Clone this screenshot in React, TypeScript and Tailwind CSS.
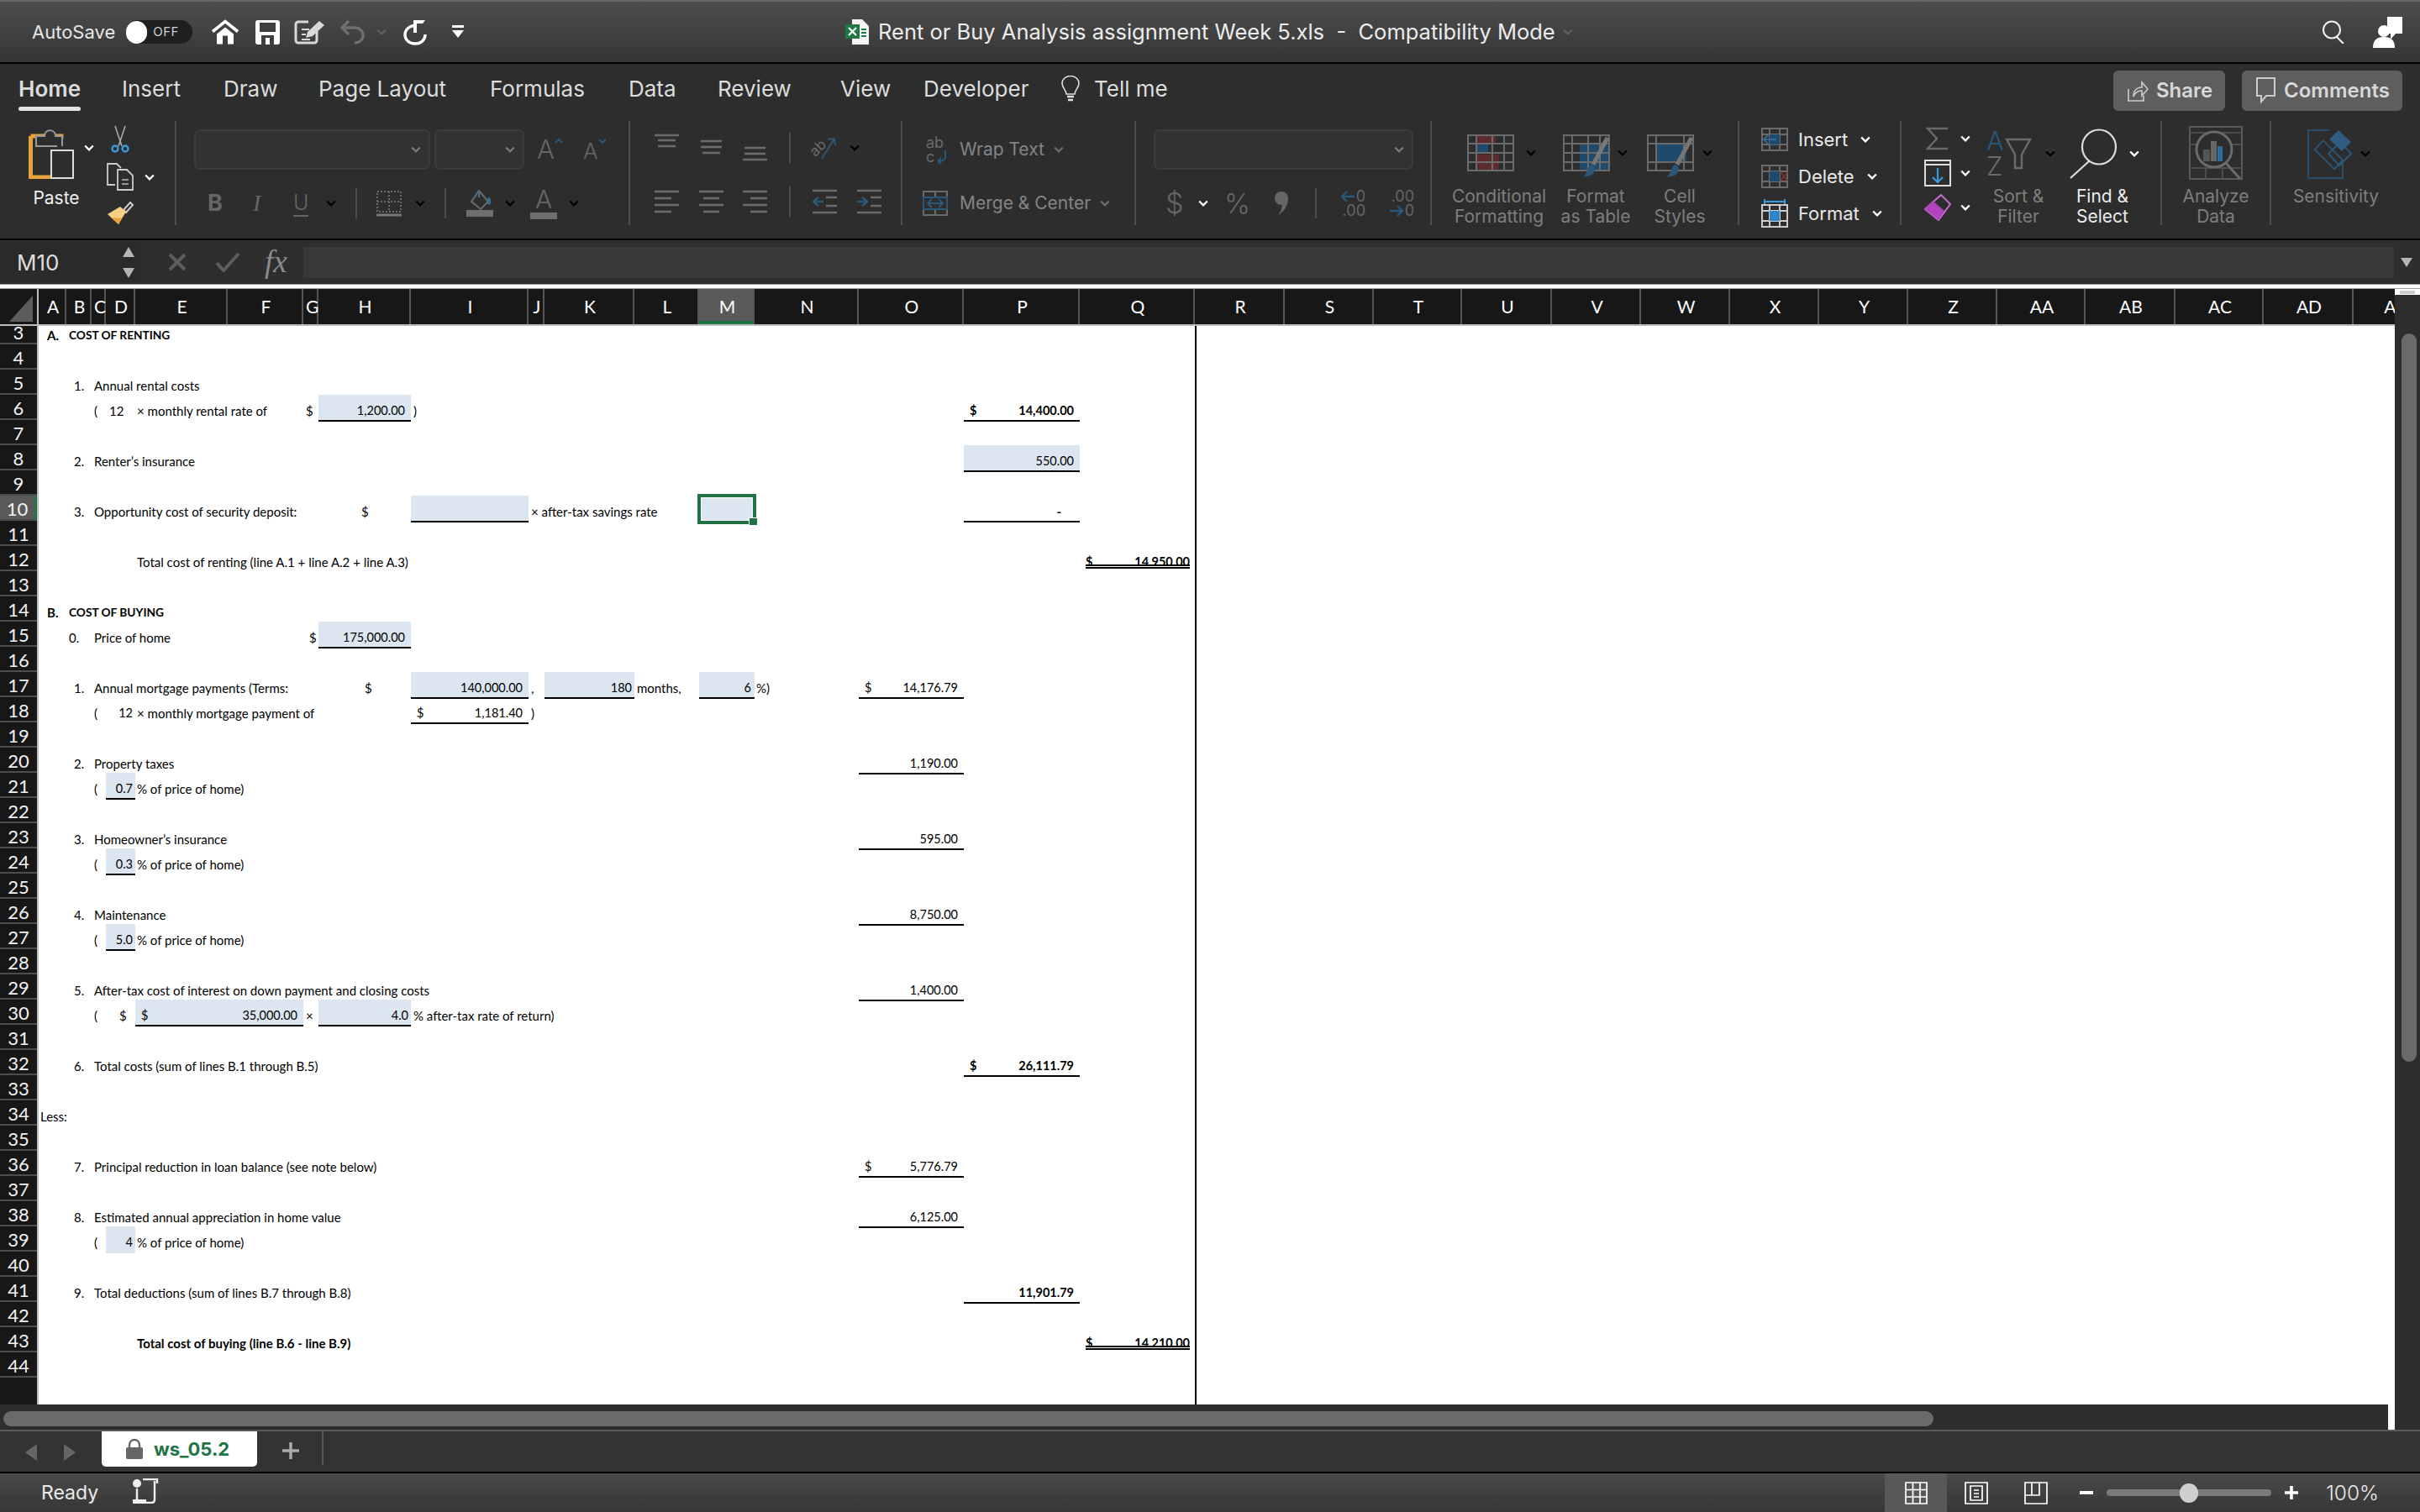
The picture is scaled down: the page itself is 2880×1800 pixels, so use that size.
import type { ReactNode } from 'react';

const GRAY = '#6b6b6b';
const BLUE = '#2b5878';

type SvgProps = { className?: string; children: ReactNode; w: number; h: number };

const Ic = ({ className = '', children, w, h }: SvgProps) => (
  <svg className={`shrink-0 ${className}`} width={w} height={h} viewBox={`0 0 ${w} ${h}`} fill="none">
    {children}
  </svg>
);

const Chev = ({ className = 'text-[#777]' }: { className?: string }) => (
  <svg className={`h-[8px] w-[12px] shrink-0 ${className}`} viewBox="0 0 12 8" fill="none">
    <path d="M1.2 1.5 6 6.3l4.8-4.8" stroke="currentColor" strokeWidth="2.4" />
  </svg>
);

const Sep = ({ className = '' }: { className?: string }) => <div className={`h-[36px] w-[2px] shrink-0 bg-[#4d4d4d] ${className}`} />;

// ---------- quick access ----------
const TitleBar = () => (
  <div className="flex h-[76px] shrink-0 items-center border-t-2 border-b-2 border-t-[#666] border-b-black bg-linear-to-b from-[#4e4e4e] to-[#353535]">
    <div className="flex w-[1006px] shrink-0 items-center pl-[38px]">
      <span className="text-[22px] text-[#e6e6e6]">AutoSave</span>
      <div className="ml-[13px] flex h-[28px] w-[79px] items-center rounded-full bg-[#1f1f1f]">
        <div className="h-[27px] w-[25px] rounded-full bg-white" />
        <span className="ml-[7px] text-[15px] tracking-[0.5px] text-[#cfcfcf]">OFF</span>
      </div>
      <Ic w={34} h={30} className="ml-[22px]">
        <path d="M2 14.5 17 2.5l15 12" stroke="#fff" strokeWidth="3.6" />
        <path d="M7 29.500V17.500l10-8 10 8v12h-7v-10h-6v10z" fill="#fff" />
      </Ic>
      <Ic w={29} h={29} className="ml-[19px]">
        <rect width="29" height="29" rx="3" fill="#fff" />
        <rect x="5" y="3" width="19" height="11" fill="#3f3f3f" />
        <rect x="7" y="18" width="15" height="11" fill="#3f3f3f" />
        <rect x="12" y="21" width="5" height="8" fill="#fff" />
      </Ic>
      <Ic w={37} h={30} className="ml-[17px]">
        <path d="M17 3H5a3 3 0 0 0-3 3v19a3 3 0 0 0 3 3h19a3 3 0 0 0 3-3V14" stroke="#d8d8d8" strokeWidth="3" />
        <path d="m14 22 2-7L30 2l6 5-14 13z" fill="#d8d8d8" />
        <path d="M9 12h9M9 18h5M9 24h10" stroke="#d8d8d8" strokeWidth="2" />
      </Ic>
      <Ic w={32} h={30} className="ml-[17px]">
        <path d="M11 2 3 10l8 8" stroke="#6f6f6f" strokeWidth="3.4" />
        <path d="M4 10h14c6 0 10 4 10 9s-4 9-10 9" stroke="#6f6f6f" strokeWidth="3.4" />
      </Ic>
      <Chev className="ml-[12px] text-[#5f5f5f]" />
      <Ic w={30} h={31} className="ml-[19px]">
        <path d="M15 7C8 8 3 12 3 18.5 3 24.5 8 29 15 29s12-4.5 12-11" stroke="#fff" strokeWidth="3.4" />
        <path d="M17 1h10l-3 4H17v11h-4V1z" fill="#fff" />
      </Ic>
      <Ic w={16} h={16} className="ml-[28px]">
        <rect x="1" width="14" height="3" fill="#fff" />
        <path d="M1 6h14l-7 9z" fill="#fff" />
      </Ic>
    </div>
    <Ic w={28} h={30}>
      <path d="M8 0h12l8 8v22H8z" fill="#f4f4f4" />
      <rect y="6" width="17" height="17" fill="#1e7a45" />
      <path d="m4 10 9 9m0-9-9 9" stroke="#fff" strokeWidth="2.2" />
      <path d="M19 12h6M19 16h6M19 20h6" stroke="#1e7a45" strokeWidth="2" />
    </Ic>
    <span className="ml-[11px] whitespace-pre text-[25.5px] text-[#ececec]">Rent or Buy Analysis assignment Week 5.xls  -  Compatibility Mode</span>
    <Chev className="ml-[9px] text-[#5f5f5f]" />
    <div className="ml-auto flex items-center pr-[20px]">
      <Ic w={28} h={28}>
        <circle cx="12" cy="11.5" r="10" stroke="#eee" strokeWidth="2" />
        <path d="m18 20 8 8" stroke="#eee" strokeWidth="2.2" />
      </Ic>
      <Ic w={36} h={37} className="ml-[33px]">
        <path d="M17 0h18v20H27l-6 7v-7h-4z" fill="#fff" />
        <circle cx="13" cy="17" r="7" fill="#fff" />
        <path d="M0 37c0-9 4-13 13-13s13 4 13 13z" fill="#fff" />
      </Ic>
    </div>
  </div>
);

// ---------- tabs ----------
const TABS = [
  { label: 'Insert', w: 'w-[121px]' },
  { label: 'Draw', w: 'w-[113px]' },
  { label: 'Page Layout', w: 'w-[204px]' },
  { label: 'Formulas', w: 'w-[165px]' },
  { label: 'Data', w: 'w-[106px]' },
  { label: 'Review', w: 'w-[146px]' },
  { label: 'View', w: 'w-[99px]' },
  { label: 'Developer', w: 'w-[163px]' },
];

const TabRow = () => (
  <div className="flex h-[68px] shrink-0 items-start pl-[22px] pt-[10px] text-[26px] text-[#dcdcdc]">
    <div className="w-[123px] shrink-0">
      <span className="inline-block font-semibold">
        Home
        <div className="mt-[2px] h-[5px] rounded-full bg-[#e2e2e2]" />
      </span>
    </div>
    {TABS.map(t => (
      <span key={t.label} className={`${t.w} shrink-0`}>
        {t.label}
      </span>
    ))}
    <Ic w={24} h={32} className="mt-[4px]">
      <path d="M7 22c0-5-5-7-5-13a10 8.500 0 0 1 20 0c0 6-5 8-5 13z" stroke="#ddd" strokeWidth="1.6" />
      <path d="M8 25h8M9 29h6" stroke="#ddd" strokeWidth="2.4" />
    </Ic>
    <span className="ml-[16px]">Tell me</span>
    <div className="ml-auto mr-[21px] -mt-[2px] flex text-[#d8d8d8]">
      <div className="flex h-[48px] w-[133px] items-center rounded-[6px] bg-[#5e5e5e] pl-[16px] text-[24px] font-semibold">
        <Ic w={26} h={28}>
          <path d="M2 12v14h18v-6" stroke="#ccc" strokeWidth="1.6" />
          <path d="M8 21c0-7 4-11 10-11V4l7 8-7 8v-6c-4 0-8 2-10 7z" stroke="#ccc" strokeWidth="1.6" />
        </Ic>
        <span className="ml-[9px]">Share</span>
      </div>
      <div className="ml-[20px] flex h-[48px] w-[191px] items-center rounded-[6px] bg-[#5e5e5e] pl-[17px] text-[24px] font-semibold">
        <Ic w={24} h={32}>
          <path d="M1 1h21v21H12l-6 7v-7H1z" stroke="#ccc" strokeWidth="2" />
        </Ic>
        <span className="ml-[9px]">Comments</span>
      </div>
    </div>
  </div>
);

// ---------- ribbon ----------
const Group = ({ className, children }: { className: string; children: ReactNode }) => (
  <div className={`h-[124px] shrink-0 border-r-2 border-[#4d4d4d] ${className}`}>{children}</div>
);

const AlignIcon = ({ rows }: { rows: [number, number][] }) => (
  <Ic w={29} h={36}>
    {rows.map(([y, x]) => (
      <path key={y} d={`M${x} ${y}h${29 - 2 * x}`} stroke={GRAY} strokeWidth="2.6" />
    ))}
  </Ic>
);

const HAlign = ({ lines }: { lines: string[] }) => (
  <Ic w={29} h={28}>
    {lines.map((d, i) => (
      <path key={i} d={d} stroke={GRAY} strokeWidth="2.6" />
    ))}
  </Ic>
);

const BigLabel = ({ children, className = 'text-[#7e7e7e]' }: { children: ReactNode; className?: string }) => (
  <div className={`text-center text-[21px] leading-[24px] ${className}`}>{children}</div>
);

const GridLines = ({ c = GRAY }: { c?: string }) => (
  <g stroke={c} strokeWidth="2">
    <rect x="1" y="1" width="54" height="42" />
    <path d="M1 11h54M1 22h54M1 33h54M11 1v42M30 1v42M44 1v42" />
  </g>
);

const Brush = () => (
  <g>
    <path d="M36 36 53 4" stroke="#777" strokeWidth="5" />
    <path d="M24 50c6 1 14-2 14-9 0-4-5-6-7-3-2 2-1 7-7 12z" fill={BLUE} />
  </g>
);

const Clipboard = () => (
  <Group className="flex w-[210px]">
    <div className="ml-[30px] w-[74px] pt-[10px]">
      <Ic w={56} h={59} className="ml-[4px]">
        <path d="M1.500 9h39M1.500 9v49h26" stroke="#e8a33a" strokeWidth="5" transform="translate(1 -1)" />
        <path d="M37 6v12" stroke="#e8a33a" strokeWidth="5" />
        <path d="M9 21V8h10c0-9 13-9 13 0h8v12" stroke="#999" strokeWidth="2" fill="#2d2d2d" />
        <path d="M9 20h25" stroke="#999" strokeWidth="2" />
        <rect x="27" y="25" width="26" height="33" stroke="#ddd" strokeWidth="2" fill="#2d2d2d" />
      </Ic>
      <div className="mt-[11px] text-center text-[21px] leading-[24px] text-[#efefef]">Paste</div>
    </div>
    <Chev className="-ml-[4px] mt-[28px] text-white" />
    <div className="ml-[15px] flex flex-col pt-[6px]">
      <Ic w={26} h={34} className="ml-[3px]">
        <path d="m7 0 8 24M19 0l-8 24" stroke="#aaa" strokeWidth="1.600" />
        <circle cx="7" cy="27" r="3.500" stroke="#3a9bdc" strokeWidth="2.400" />
        <circle cx="19" cy="27" r="3.500" stroke="#3a9bdc" strokeWidth="2.400" />
      </Ic>
      <div className="mt-[10px] flex items-center">
        <Ic w={33} h={33}>
          <path d="M10 26H1V1h11l5 5" stroke="#ccc" strokeWidth="1.800" />
          <path d="M13 8h11l7 7v17H13z" stroke="#ccc" strokeWidth="1.800" />
          <path d="M18 20h8M18 25h8" stroke="#999" strokeWidth="1.800" />
        </Ic>
        <Chev className="ml-[12px] text-white" />
      </div>
      <Ic w={33} h={30} className="mt-[11px]">
        <path d="M20 12 28 3l3 3-8 9z" stroke="#ccc" strokeWidth="2" />
        <path d="M16 8 1 17l13 12 9-15z" fill="#f4cf84" />
        <path d="m5 21 9 8 4-7z" fill="#e8a33a" />
      </Ic>
    </div>
  </Group>
);

const Font = () => (
  <Group className="w-[540px]">
    <div className="mt-[10px] flex h-[48px] items-center">
      <div className="ml-[21px] flex h-[48px] w-[281px] items-center justify-end rounded-[7px] border-2 border-[#3b3b3b] bg-[#323232] pr-[9px]">
        <Chev />
      </div>
      <div className="ml-[5px] flex h-[48px] w-[107px] items-center justify-end rounded-[7px] border-2 border-[#3b3b3b] bg-[#323232] pr-[9px]">
        <Chev />
      </div>
      <div className="ml-[15px] flex w-[32px] items-start text-[31px] font-light leading-[36px] text-[#666]">
        A
        <Ic w={10} h={8} className="mt-[4px]">
          <path d="m1 6 4-4 4 4" stroke={BLUE} strokeWidth="2" />
        </Ic>
      </div>
      <div className="ml-[23px] flex w-[32px] items-start pt-[4px] text-[26px] font-light leading-[32px] text-[#666]">
        A
        <Ic w={10} h={8}>
          <path d="m1 2 4 4 4-4" stroke={BLUE} strokeWidth="2" />
        </Ic>
      </div>
    </div>
    <div className="mt-[20px] flex h-[40px] items-center">
      <span className="ml-[37px] w-[16px] text-[27px] font-bold text-[#666]">B</span>
      <span className="ml-[38px] w-[14px] font-['Liberation_Serif',serif] text-[28px] italic text-[#666]">I</span>
      <span className="ml-[34px] w-[18px] border-b-2 border-[#666] text-[25px] font-light leading-[30px] text-[#666]">U</span>
      <Chev className="ml-[21px]" />
      <Sep className="ml-[23px]" />
      <Ic w={30} h={31} className="ml-[23px]">
        <rect x="1" y="1" width="28" height="24" stroke={GRAY} strokeWidth="2" strokeDasharray="2 2" />
        <path d="M15 1v24M1 13h28" stroke={GRAY} strokeWidth="2" strokeDasharray="2 2" />
        <path d="M0 29h30" stroke="#777" strokeWidth="3" />
      </Ic>
      <Chev className="ml-[16px]" />
      <Sep className="ml-[23px]" />
      <Ic w={32} h={32} className="ml-[24px]">
        <path d="m15 1 11 13-9 9-11-9z" stroke={GRAY} strokeWidth="2" />
        <path d="M15 1v8M27 10c2 3 2 6 0 7-2-1-2-4 0-7z" stroke="#3c6f95" strokeWidth="2" />
        <rect y="24" width="32" height="8" fill="#6e6e6e" />
      </Ic>
      <Chev className="ml-[14px]" />
      <div className="ml-[18px] w-[32px] text-center">
        <div className="text-[30px] font-light leading-[26px] text-[#666]">A</div>
        <div className="mt-[3px] h-[8px] bg-[#6e6e6e]" />
      </div>
      <Chev className="ml-[14px]" />
    </div>
  </Group>
);

const Alignment = () => (
  <Group className="w-[324px]">
    <div className="mt-[12px] flex h-[40px] items-center">
      <div className="ml-[29px]">
        <AlignIcon rows={[[3, 0], [9, 4], [16, 4]]} />
      </div>
      <div className="ml-[24px]">
        <AlignIcon rows={[[10, 2], [17, 2], [24, 4]]} />
      </div>
      <div className="ml-[23px]">
        <AlignIcon rows={[[18, 2], [25, 2], [32, 0]]} />
      </div>
      <Sep className="ml-[26px]" />
      <div className="ml-[24px] flex h-[36px] w-[36px] shrink-0 items-center justify-center">
        <span className="-ml-[8px] -rotate-45 text-[17px] leading-[18px] text-[#6b6b6b]">ab</span>
        <Ic w={18} h={28} className="-ml-[6px]">
          <path d="M1 27 16 3m0 0-8 1m8-1 1 8" stroke={BLUE} strokeWidth="2" />
        </Ic>
      </div>
      <Chev className="ml-[10px]" />
    </div>
    <div className="mt-[24px] flex h-[40px] items-center">
      <div className="ml-[29px]">
        <HAlign lines={['M0 2h29', 'M0 10h20', 'M0 18h29', 'M0 26h20']} />
      </div>
      <div className="ml-[24px]">
        <HAlign lines={['M0 2h29', 'M5 10h19', 'M0 18h29', 'M5 26h19']} />
      </div>
      <div className="ml-[23px]">
        <HAlign lines={['M0 2h29', 'M9 10h20', 'M0 18h29', 'M9 26h20']} />
      </div>
      <Sep className="ml-[26px]" />
      <Ic w={29} h={30} className="ml-[26px]">
        <path d="M0 2h29M16 10h13M16 20h13M0 28h29" stroke={GRAY} strokeWidth="2.6" />
        <path d="M1 15h12m-6-5-6 5 6 5" stroke={BLUE} strokeWidth="2.400" />
      </Ic>
      <Ic w={29} h={30} className="ml-[24px]">
        <path d="M0 2h29M16 10h13M16 20h13M0 28h29" stroke={GRAY} strokeWidth="2.6" />
        <path d="M0 15h12m-6-5 6 5-6 5" stroke={BLUE} strokeWidth="2.400" />
      </Ic>
    </div>
  </Group>
);

const Wrap = () => (
  <Group className="w-[278px] text-[21px] text-[#858585]">
    <div className="mt-[14px] flex h-[40px] items-center">
      <div className="ml-[28px] w-[30px] shrink-0 text-[18px] leading-[17px] text-[#6b6b6b]">
        ab
        <div className="flex items-center">
          c
          <Ic w={16} h={17}>
            <path d="M13 1v8c0 3-2 5-9 5m0 0 4-4m-4 4 4 3" stroke={BLUE} strokeWidth="2" />
          </Ic>
        </div>
      </div>
      <span className="ml-[10px]">Wrap Text</span>
      <Chev className="ml-[11px] text-[#6b6b6b]" />
    </div>
    <div className="mt-[24px] flex h-[40px] items-center">
      <Ic w={30} h={30} className="ml-[24px]">
        <rect x="1" y="1" width="28" height="28" stroke={GRAY} strokeWidth="2" />
        <path d="M1 8h28M1 22h28M15 1v7M15 22v7" stroke={GRAY} strokeWidth="2" />
        <rect x="1" y="8" width="28" height="14" stroke={BLUE} strokeWidth="2" />
        <path d="M6 15h18m-13-5-5 5 5 5m8-10 5 5-5 5" stroke={BLUE} strokeWidth="2" />
      </Ic>
      <span className="ml-[14px]">Merge &amp; Center</span>
      <Chev className="ml-[11px] text-[#6b6b6b]" />
    </div>
  </Group>
);

const NumberGroup = () => (
  <Group className="w-[352px]">
    <div className="mt-[10px] ml-[21px] flex h-[48px] w-[309px] items-center justify-end rounded-[7px] border-2 border-[#3b3b3b] bg-[#323232] pr-[9px]">
      <Chev />
    </div>
    <div className="mt-[20px] flex h-[40px] items-center text-[#666]">
      <span className="ml-[35px] w-[18px] text-[34px] font-light leading-[40px]">$</span>
      <Chev className="ml-[21px] text-white" />
      <span className="ml-[19px] w-[31px] text-[33px] font-light leading-[40px]">%</span>
      <Ic w={18} h={30} className="ml-[28px]">
        <circle cx="9" cy="9" r="8" fill="#666" />
        <path d="M17 9c0 10-6 17-12 20 4-5 5-10 5-15z" fill="#666" />
      </Ic>
      <Sep className="ml-[31px]" />
      <div className="ml-[24px] w-[34px] text-[18px] leading-[17px]">
        <div className="flex items-center justify-end">
          <Ic w={17} h={14} className="mr-[1px]">
            <path d="M1 7h15M7 1 1 7l6 6" stroke={BLUE} strokeWidth="2.400" />
          </Ic>
          0
        </div>
        <div className="text-right">.00</div>
      </div>
      <div className="ml-[24px] w-[34px] text-[18px] leading-[17px]">
        <div className="text-right">.00</div>
        <div className="flex items-center justify-end">
          <Ic w={17} h={14} className="mr-[1px]">
            <path d="M0 7h15M9 1l6 6-6 6" stroke={BLUE} strokeWidth="2.400" />
          </Ic>
          0
        </div>
      </div>
    </div>
  </Group>
);

const Styles = () => (
  <Group className="flex w-[366px] pl-[12px]">
    <div className="w-[136px]">
      <div className="flex h-[78px] items-start pt-[16px]">
        <Ic w={56} h={44} className="ml-[30px]">
          <rect x="11" y="1" width="23" height="11" fill="#5d2b2b" />
          <rect x="11" y="12" width="14" height="10" fill="#1f4a6b" />
          <rect x="11" y="24" width="27" height="19" fill="#5d2b2b" />
          <GridLines />
        </Ic>
        <Chev className="ml-[14px] mt-[18px]" />
      </div>
      <BigLabel>Conditional<br />Formatting</BigLabel>
    </div>
    <div className="w-[94px]">
      <div className="flex h-[78px] items-start pt-[16px]">
        <Ic w={60} h={52} className="ml-[8px]">
          <rect x="20" y="12" width="36" height="31" fill="#1f4a6b" />
          <GridLines />
          <Brush />
        </Ic>
        <Chev className="ml-[5px] mt-[18px]" />
      </div>
      <BigLabel>Format<br />as Table</BigLabel>
    </div>
    <div className="w-[106px]">
      <div className="flex h-[78px] items-start pt-[16px]">
        <Ic w={60} h={52} className="ml-[14px]">
          <rect x="11" y="12" width="36" height="21" fill="#1f4a6b" />
          <path d="M1 1h54v42H1zM1 11h54M1 33h54M11 1v42M44 1v42" stroke={GRAY} strokeWidth="2" />
          <Brush />
        </Ic>
        <Chev className="ml-[6px] mt-[18px]" />
      </div>
      <BigLabel>Cell<br />Styles</BigLabel>
    </div>
  </Group>
);

const CELL_ROWS = ['Insert', 'Delete', 'Format'];

const Cells = () => (
  <Group className="w-[193px]">
    <div className="flex flex-col">
      {CELL_ROWS.map(label => (
        <div key={label} className="flex h-[44px] items-center text-[22px] text-[#e8e8e8]">
          <Ic w={32} h={34} className="ml-[26px]">
            {label === 'Format' ? (
              <g>
                <path d="M4 3h24M4 0v6M28 0v6" stroke="#3a9bdc" strokeWidth="2" />
                <rect x="1" y="7" width="30" height="26" stroke="#ccc" strokeWidth="2" />
                <path d="M1 14h30M1 26h30M10 7v26M22 7v26" stroke="#ccc" strokeWidth="2" />
                <rect x="10" y="14" width="12" height="12" fill="#2e86c9" />
              </g>
            ) : (
              <g>
                <rect x="1" y="4" width="30" height="26" stroke={GRAY} strokeWidth="2" />
                <path d="M1 11h30M1 23h30M10 4v26M22 4v26" stroke={GRAY} strokeWidth="2" />
                <rect x="10" y="11" width="12" height="12" fill="#1f4a6b" />
                {label === 'Insert' ? (
                  <path d="M18 17H3m5-5-5 5 5 5" stroke="#2f6a96" strokeWidth="2" />
                ) : (
                  <path d="m23 12 8 10m0-10-8 10" stroke="#7a3030" strokeWidth="2" />
                )}
              </g>
            )}
          </Ic>
          <span className="ml-[12px]">{label}</span>
          <Chev className="ml-[15px] text-white" />
        </div>
      ))}
    </div>
  </Group>
);

const Editing = () => (
  <Group className="flex w-[310px]">
    <div className="flex w-[89px] flex-col">
      <div className="flex h-[44px] items-center">
        <Ic w={32} h={30} className="ml-[27px]">
          <path d="M28 3H4l11 12L4 27h24" stroke={GRAY} strokeWidth="2.4" />
        </Ic>
        <Chev className="ml-[11px] text-white" />
      </div>
      <div className="flex h-[44px] items-center">
        <Ic w={32} h={32} className="ml-[27px]">
          <rect x="1" y="1" width="30" height="30" stroke="#ddd" strokeWidth="2" />
          <path d="M1 6h30" stroke="#ddd" strokeWidth="2" />
          <path d="M16 10v17m-6-6 6 6 6-6" stroke="#3a9bdc" strokeWidth="2.200" />
        </Ic>
        <Chev className="ml-[11px] text-white" />
      </div>
      <div className="flex h-[44px] items-center">
        <Ic w={32} h={32} className="ml-[27px]">
          <path d="M20 1 31 12 17 31 1 18z" stroke="#c66ad0" strokeWidth="2" />
          <path d="M10 8 24 20 17 31 1 18z" fill="#b044bc" />
        </Ic>
        <Chev className="ml-[11px] text-white" />
      </div>
    </div>
    <div className="w-[100px]">
      <div className="flex h-[78px] items-center">
        <div className="ml-[12px] flex w-[56px] shrink-0 items-center">
          <div className="w-[22px] shrink-0 text-[31px] font-light leading-[30px]">
            <div className="text-[#2b5878]">A</div>
            <div className="text-[#6b6b6b]">Z</div>
          </div>
          <Ic w={32} h={38}>
            <path d="M2 2h28L20 20v16h-8V20z" stroke={GRAY} strokeWidth="2.400" />
          </Ic>
        </div>
        <Chev className="ml-[14px]" />
      </div>
      <BigLabel>Sort &amp;<br />Filter</BigLabel>
    </div>
    <div className="w-[100px]">
      <div className="flex h-[78px] items-center">
        <Ic w={58} h={60} className="ml-[10px]">
          <ellipse cx="36" cy="22" rx="20" ry="20.500" stroke="#ddd" strokeWidth="2.200" />
          <path d="M24 39 2 59" stroke="#ddd" strokeWidth="2.200" />
        </Ic>
        <Chev className="ml-[14px] text-white" />
      </div>
      <BigLabel className="text-[#ececec]">Find &amp;<br />Select</BigLabel>
    </div>
  </Group>
);

const Analyze = () => (
  <Group className="w-[130px]">
    <div className="flex h-[78px] justify-center pt-[6px]">
      <Ic w={64} h={64}>
        <rect x="1" y="1" width="62" height="62" stroke="#5a5a5a" strokeWidth="2" />
        <path d="M1 8h62M1 22h62M1 50h62M20 50v12M40 50v12" stroke="#4d4d4d" strokeWidth="2" />
        <circle cx="30" cy="28" r="21" stroke="#6b6b6b" strokeWidth="3" fill="#2d2d2d" />
        <path d="m44 44 17 19" stroke="#6b6b6b" strokeWidth="3" />
        <rect x="17" y="28" width="8" height="14" fill="#555" />
        <rect x="26" y="18" width="7" height="24" fill="#666" />
        <rect x="34" y="24" width="6" height="18" fill="#2a6fa0" />
      </Ic>
    </div>
    <BigLabel>Analyze<br />Data</BigLabel>
  </Group>
);

const Sensitivity = () => (
  <div className="h-[124px] w-[177px] shrink-0">
    <div className="flex h-[78px] items-center">
      <Ic w={54} h={60} className="ml-[43px]">
        <path d="M26 2H1v57h41V40" stroke="#264e6d" strokeWidth="2" />
        <path d="m25 30 14 -14 13 14-14 14z" fill="#2d2d2d" stroke={BLUE} strokeWidth="2" />
        <path d="m12 30 11-12 26 26-11 12z" stroke={BLUE} strokeWidth="2" transform="translate(-2 -2) scale(.9)" />
        <path d="m26 13 11-11 15 14-11 11z" fill="#2f5c80" />
      </Ic>
      <Chev className="ml-[9px]" />
    </div>
    <BigLabel className="ml-[5px] w-[144px] text-[#7e7e7e]">Sensitivity</BigLabel>
  </div>
);

const Ribbon = () => (
  <div className="h-[210px] shrink-0 border-b-2 border-black bg-[#2d2d2d]">
    <TabRow />
    <div className="flex">
      <Clipboard />
      <Font />
      <Alignment />
      <Wrap />
      <NumberGroup />
      <Styles />
      <Cells />
      <Editing />
      <Analyze />
      <Sensitivity />
    </div>
  </div>
);

const FormulaBar = () => (
  <div className="flex h-[52px] shrink-0 items-center bg-[#2e2e2e]">
    <div className="flex h-[48px] w-[168px] shrink-0 items-center bg-[#2a2a2a] pl-[20px] text-[26px] text-[#dedede]">
      M10
      <div className="ml-auto mr-[8px] flex flex-col gap-[13px]">
        <div className="h-0 w-0 border-x-[7px] border-b-[12px] border-x-transparent border-b-[#b5b5b5]" />
        <div className="h-0 w-0 border-x-[7px] border-t-[12px] border-x-transparent border-t-[#b5b5b5]" />
      </div>
    </div>
    <Ic w={22} h={22} className="ml-[32px]">
      <path d="m2 2 18 18M20 2 2 20" stroke="#5e5e5e" strokeWidth="4" />
    </Ic>
    <Ic w={30} h={24} className="ml-[34px]">
      <path d="m2 13 8 9L28 2" stroke="#5e5e5e" strokeWidth="4" />
    </Ic>
    <span className="ml-[29px] w-[46px] font-['Liberation_Serif',serif] text-[37px] italic leading-[40px] text-[#8a8a8a]">fx</span>
    <div className="h-[37px] w-[2488px] shrink-0 bg-[#393939]" />
    <div className="ml-[8px] h-0 w-0 border-x-[7px] border-t-[11px] border-x-transparent border-t-[#b5b5b5]" />
  </div>
);

// ---------- sheet ----------
const COLUMNS = [
  { n: 'A', w: 'w-[33px]' }, { n: 'B', w: 'w-[30px]' }, { n: 'C', w: 'w-[17px]' }, { n: 'D', w: 'w-[35px]' },
  { n: 'E', w: 'w-[110px]' }, { n: 'F', w: 'w-[90px]' }, { n: 'G', w: 'w-[18px]' }, { n: 'H', w: 'w-[110px]' },
  { n: 'I', w: 'w-[140px]' }, { n: 'J', w: 'w-[19px]' }, { n: 'K', w: 'w-[107px]' }, { n: 'L', w: 'w-[77px]' },
  { n: 'M', w: 'w-[66px]' }, { n: 'N', w: 'w-[124px]' }, { n: 'O', w: 'w-[125px]' }, { n: 'P', w: 'w-[138px]' },
  { n: 'Q', w: 'w-[137px]' }, { n: 'R', w: 'w-[107px]' }, { n: 'S', w: 'w-[106px]' }, { n: 'T', w: 'w-[105px]' },
  { n: 'U', w: 'w-[107px]' }, { n: 'V', w: 'w-[106px]' }, { n: 'W', w: 'w-[106px]' }, { n: 'X', w: 'w-[106px]' },
  { n: 'Y', w: 'w-[106px]' }, { n: 'Z', w: 'w-[106px]' }, { n: 'AA', w: 'w-[105px]' }, { n: 'AB', w: 'w-[107px]' },
  { n: 'AC', w: 'w-[105px]' }, { n: 'AD', w: 'w-[107px]' }, { n: 'AE', w: 'w-[98px]' },
];

type Cell = { at: string; t?: string; usd?: boolean; bold?: boolean; fill?: boolean; line?: boolean; total?: boolean; sel?: boolean };

const FILL = true;
const SHEET: Record<number, Cell[]> = {
  3: [{ at: 'col-start-1 pl-[10px]', t: 'A.', bold: true }, { at: 'col-start-2 pl-[3px] text-[13.7px]', t: 'COST OF RENTING', bold: true }],
  5: [{ at: 'col-start-2 pl-[9px]', t: '1.' }, { at: 'col-start-3 pl-[3px]', t: 'Annual rental costs' }],
  6: [
    { at: 'col-start-3 pl-[3px]', t: '(' },
    { at: 'col-start-4 pl-[4px]', t: '12' },
    { at: 'col-start-5 pl-[2px]', t: '× monthly rental rate of' },
    { at: 'col-start-7 pl-[3px]', t: '$' },
    { at: 'col-start-8 pr-[7px] text-right text-[14.5px]', t: '1,200.00', fill: FILL, line: true },
    { at: 'col-start-9 pl-[3px]', t: ')' },
    { at: 'col-start-16 px-[7px] text-[14.5px]', t: '14,400.00', usd: true, bold: true, line: true },
  ],
  8: [
    { at: 'col-start-2 pl-[9px]', t: '2.' },
    { at: 'col-start-3 pl-[3px]', t: 'Renter’s insurance' },
    { at: 'col-start-16 pr-[7px] text-right text-[14.5px]', t: '550.00', fill: FILL, line: true },
  ],
  10: [
    { at: 'col-start-2 pl-[9px]', t: '3.' },
    { at: 'col-start-3 pl-[3px]', t: 'Opportunity cost of security deposit:' },
    { at: 'col-start-8 pl-[51px]', t: '$' },
    { at: 'col-start-9', fill: FILL, line: true },
    { at: 'col-start-10 pl-[3px]', t: '× after-tax savings rate' },
    { at: 'col-start-13', fill: FILL, sel: true },
    { at: 'col-start-16 pr-[22px] text-right', t: '-', bold: true, line: true },
  ],
  12: [
    { at: 'col-start-5 pl-[2px]', t: 'Total cost of renting (line A.1 + line A.2 + line A.3)' },
    { at: 'col-start-17 ml-[7px] mr-[6px] text-[14.5px]', t: '14,950.00', usd: true, bold: true, total: true },
  ],
  14: [{ at: 'col-start-1 pl-[10px]', t: 'B.', bold: true }, { at: 'col-start-2 pl-[3px] text-[13.7px]', t: 'COST OF BUYING', bold: true }],
  15: [
    { at: 'col-start-2 pl-[3px]', t: '0.' },
    { at: 'col-start-3 pl-[3px]', t: 'Price of home' },
    { at: 'col-start-7 pl-[7px]', t: '$' },
    { at: 'col-start-8 pr-[7px] text-right text-[14.5px]', t: '175,000.00', fill: FILL, line: true },
  ],
  17: [
    { at: 'col-start-2 pl-[9px]', t: '1.' },
    { at: 'col-start-3 pl-[3px]', t: 'Annual mortgage payments (Terms:' },
    { at: 'col-start-8 pl-[55px]', t: '$' },
    { at: 'col-start-9 pr-[7px] text-right text-[14.5px]', t: '140,000.00', fill: FILL, line: true },
    { at: 'col-start-10 pl-[3px]', t: ',' },
    { at: 'col-start-11 pr-[3px] text-right text-[14.5px]', t: '180', fill: FILL, line: true },
    { at: 'col-start-12 pl-[3px]', t: 'months,' },
    { at: 'col-start-13 pr-[4px] text-right text-[14.5px]', t: '6', fill: FILL, line: true },
    { at: 'col-start-14 pl-[2px]', t: '%)' },
    { at: 'col-start-15 px-[7px] text-[14.5px]', t: '14,176.79', usd: true, line: true },
  ],
  18: [
    { at: 'col-start-3 pl-[3px]', t: '(' },
    { at: 'col-start-4 pr-[3px] text-right text-[14.5px]', t: '12' },
    { at: 'col-start-5 pl-[2px]', t: '× monthly mortgage payment of' },
    { at: 'col-start-9 px-[7px] text-[14.5px]', t: '1,181.40', usd: true, line: true },
    { at: 'col-start-10 pl-[3px]', t: ')' },
  ],
  20: [{ at: 'col-start-2 pl-[9px]', t: '2.' }, { at: 'col-start-3 pl-[3px]', t: 'Property taxes' }, { at: 'col-start-15 pr-[7px] text-right text-[14.5px]', t: '1,190.00', line: true }],
  21: [
    { at: 'col-start-3 pl-[3px]', t: '(' },
    { at: 'col-start-4 pr-[3px] text-right text-[14.5px]', t: '0.7', fill: FILL, line: true },
    { at: 'col-start-5 pl-[2px]', t: '% of price of home)' },
  ],
  23: [{ at: 'col-start-2 pl-[9px]', t: '3.' }, { at: 'col-start-3 pl-[3px]', t: 'Homeowner’s insurance' }, { at: 'col-start-15 pr-[7px] text-right text-[14.5px]', t: '595.00', line: true }],
  24: [
    { at: 'col-start-3 pl-[3px]', t: '(' },
    { at: 'col-start-4 pr-[3px] text-right text-[14.5px]', t: '0.3', fill: FILL, line: true },
    { at: 'col-start-5 pl-[2px]', t: '% of price of home)' },
  ],
  26: [{ at: 'col-start-2 pl-[9px]', t: '4.' }, { at: 'col-start-3 pl-[3px]', t: 'Maintenance' }, { at: 'col-start-15 pr-[7px] text-right text-[14.5px]', t: '8,750.00', line: true }],
  27: [
    { at: 'col-start-3 pl-[3px]', t: '(' },
    { at: 'col-start-4 pr-[3px] text-right text-[14.5px]', t: '5.0', fill: FILL, line: true },
    { at: 'col-start-5 pl-[2px]', t: '% of price of home)' },
  ],
  29: [
    { at: 'col-start-2 pl-[9px]', t: '5.' },
    { at: 'col-start-3 pl-[3px]', t: 'After-tax cost of interest on down payment and closing costs' },
    { at: 'col-start-15 pr-[7px] text-right text-[14.5px]', t: '1,400.00', line: true },
  ],
  30: [
    { at: 'col-start-3 pl-[3px]', t: '(' },
    { at: 'col-start-4 pl-[16px]', t: '$' },
    { at: 'col-start-5 col-span-2 px-[7px] text-[14.5px]', t: '35,000.00', usd: true, fill: FILL, line: true },
    { at: 'col-start-7 pl-[3px]', t: '×' },
    { at: 'col-start-8 pr-[3px] text-right text-[14.5px]', t: '4.0', fill: FILL, line: true },
    { at: 'col-start-9 pl-[3px]', t: '% after-tax rate of return)' },
  ],
  32: [
    { at: 'col-start-2 pl-[9px]', t: '6.' },
    { at: 'col-start-3 pl-[3px]', t: 'Total costs (sum of lines B.1 through B.5)' },
    { at: 'col-start-16 px-[7px] text-[14.5px]', t: '26,111.79', usd: true, bold: true, line: true },
  ],
  34: [{ at: 'col-start-1 pl-[2px]', t: 'Less:' }],
  36: [
    { at: 'col-start-2 pl-[9px]', t: '7.' },
    { at: 'col-start-3 pl-[3px]', t: 'Principal reduction in loan balance (see note below)' },
    { at: 'col-start-15 px-[7px] text-[14.5px]', t: '5,776.79', usd: true, line: true },
  ],
  38: [
    { at: 'col-start-2 pl-[9px]', t: '8.' },
    { at: 'col-start-3 pl-[3px]', t: 'Estimated annual appreciation in home value' },
    { at: 'col-start-15 pr-[7px] text-right text-[14.5px]', t: '6,125.00', line: true },
  ],
  39: [
    { at: 'col-start-3 pl-[3px]', t: '(' },
    { at: 'col-start-4 pr-[3px] text-right text-[14.5px]', t: '4', fill: FILL },
    { at: 'col-start-5 pl-[2px]', t: '% of price of home)' },
  ],
  41: [
    { at: 'col-start-2 pl-[9px]', t: '9.' },
    { at: 'col-start-3 pl-[3px]', t: 'Total deductions (sum of lines B.7 through B.8)' },
    { at: 'col-start-16 pr-[7px] text-right text-[14.5px]', t: '11,901.79', bold: true, line: true },
  ],
  43: [
    { at: 'col-start-5 pl-[2px]', t: 'Total cost of buying (line B.6 - line B.9)', bold: true },
    { at: 'col-start-17 ml-[7px] mr-[6px] text-[14.5px]', t: '14,210.00', usd: true, bold: true, total: true },
  ],
};

const ROW_NUMBERS = Array.from({ length: 42 }, (_, i) => i + 3);

const SheetCell = ({ cell }: { cell: Cell }) => {
  const { at, t, usd, bold, fill, line, total, sel } = cell;
  return (
    <div
      className={`relative row-start-1 whitespace-nowrap pt-[9px] ${total ? 'h-[27px] overflow-hidden border-b-[5px] border-double border-black' : 'h-[32px]'} ${fill ? 'bg-[#dce6f1]' : ''} ${line ? 'border-b-2 border-black' : ''} ${bold ? 'font-bold' : ''} ${usd ? 'flex justify-between' : ''} ${at}`}
    >
      {usd && <span>$</span>}
      {t && <span>{t}</span>}
      {sel && (
        <>
          <div className="absolute -inset-x-[2px] -top-[2px] h-[36px] border-[4px] border-[#217346] outline outline-[1px] -outline-offset-[5px] outline-white" />
          <div className="absolute -right-[4px] top-[26px] h-[10px] w-[11px] border border-white bg-[#217346]" />
        </>
      )}
    </div>
  );
};

const Sheet = () => (
  <div className="flex h-[1358px] shrink-0">
    <div className="flex w-[2850px] shrink-0 flex-col">
      <div className="flex h-[44px] shrink-0 overflow-hidden border-b-2 border-[#bdbdbd] bg-[#171717] text-[21px] leading-[42px] text-white">
        <div className="flex w-[46px] shrink-0 items-end justify-end border-r-2 border-[#bdbdbd] pb-[3px] pr-[5px]">
          <div className="h-0 w-0 border-b-[31px] border-l-[28px] border-b-[#5c5c5c] border-l-transparent" />
        </div>
        {COLUMNS.map(col => (
          <div
            key={col.n}
            className={`${col.w} shrink-0 border-r-2 border-[#555] pl-[3px] text-center ${col.n === 'M' ? 'border-b-4 border-b-[#217346] bg-[#5a5a5a]' : ''}`}
          >
            {col.n}
          </div>
        ))}
      </div>
      <div className="flex h-[1284px] overflow-hidden">
        <div className="-mt-[8px] w-[46px] shrink-0 border-r-2 border-[#bdbdbd] bg-[#171717] text-center text-[22px] leading-[28px] text-[#f2f2f2]">
          {ROW_NUMBERS.map(n => (
            <div key={n} className={`h-[30px] border-b-2 border-[#4d4d4d] pt-[2px] ${n === 10 ? 'border-r-[3px] border-r-[#217346] bg-[#5a5a5a]' : ''}`}>
              {n}
            </div>
          ))}
        </div>
        <div className="relative min-w-0 flex-1 bg-white text-[15px] leading-[20px] text-black">
          <div className="-mt-[8px] flex flex-col">
            {ROW_NUMBERS.map(n => (
              <div
                key={n}
                className="grid h-[30px] grid-cols-[33px_30px_17px_35px_110px_90px_18px_110px_140px_19px_107px_77px_66px_124px_125px_138px_137px] grid-rows-[30px]"
              >
                {(SHEET[n] ?? []).map((cell, i) => (
                  <SheetCell key={i} cell={cell} />
                ))}
              </div>
            ))}
          </div>
          <div className="absolute inset-y-0 left-[1376px] w-[2px] bg-black" />
        </div>
      </div>
      <div className="flex h-[30px] shrink-0">
        <div className="flex w-[2842px] shrink-0 bg-[#2d2d2d] pl-[4px] pt-[8px]">
          <div className="h-[18px] w-[2297px] rounded-full bg-[#6a6a6a]" />
        </div>
        <div className="flex-1 bg-white" />
      </div>
    </div>
    <div className="flex-1 bg-[#2d2d2d]">
      <div className="flex h-[7px] items-center justify-center bg-white">
        <div className="h-[4px] w-[18px] bg-[#ccc]" />
      </div>
      <div className="ml-[8px] mt-[46px] h-[867px] w-[18px] rounded-full bg-[#6a6a6a]" />
    </div>
  </div>
);

const SheetTabs = () => (
  <div className="flex h-[52px] shrink-0 border-t-2 border-b-2 border-t-[#5a5a5a] border-b-black bg-[#333]">
    <div className="ml-[30px] mt-[15px] h-0 w-0 border-y-[10px] border-r-[14px] border-y-transparent border-r-[#666]" />
    <div className="ml-[32px] mt-[15px] h-0 w-0 border-y-[10px] border-l-[14px] border-y-transparent border-l-[#666]" />
    <div className="ml-[31px] flex h-[42px] w-[185px] items-center rounded-b-[5px] bg-white pl-[29px] text-[22px] font-bold text-[#217346]">
      <Ic w={20} h={24}>
        <path d="M4 11V7a6 6 0 0 1 12 0v4" stroke="#666" strokeWidth="2.400" />
        <rect y="10" width="20" height="14" rx="2" fill="#666" />
      </Ic>
      <span className="ml-[13px]">ws_05.2</span>
    </div>
    <Ic w={20} h={20} className="ml-[30px] mt-[13px]">
      <path d="M10 0v20M0 10h20" stroke="#aaa" strokeWidth="3.400" />
    </Ic>
    <div className="ml-[27px] h-[40px] w-[2px] bg-[#555]" />
  </div>
);

const StatusBar = () => (
  <div className="flex h-[46px] shrink-0 items-center bg-linear-to-b from-[#4a4a4a] to-[#363636] text-[23px] text-[#eaeaea]">
    <span className="ml-[49px]">Ready</span>
    <Ic w={32} h={30} className="ml-[41px] -mt-[4px]">
      <circle cx="5" cy="6" r="5" fill="#eee" />
      <path d="M5 12v13M12 1h17v5M26 3v22c0 3-2 4-4 4H3" stroke="#eee" strokeWidth="2.400" />
      <path d="M0 25h16v5H0z" fill="#eee" />
    </Ic>
    <div className="ml-auto flex h-full items-center">
      <div className="flex h-full w-[74px] items-center justify-center bg-[#585858]">
        <Ic w={27} h={27}>
          <path d="M1 1h25v25H1zM1 9.500h25M1 18h25M9.500 1v25M18 1v25" stroke="#fff" strokeWidth="1.700" />
        </Ic>
      </div>
      <Ic w={28} h={27} className="ml-[21px]">
        <path d="M1 1h26v25H1z" stroke="#fff" strokeWidth="1.700" />
        <path d="M7 5h14v17H7zM11 10h6M11 14h6M11 18h6" stroke="#fff" strokeWidth="1.700" />
      </Ic>
      <Ic w={28} h={27} className="ml-[43px]">
        <path d="M1 1h26v25H1zM1 16h17V1M9 1v15" stroke="#fff" strokeWidth="1.700" />
      </Ic>
      <div className="ml-[38px] h-[4px] w-[16px] bg-white" />
      <div className="ml-[16px] flex h-[8px] w-[196px] items-center rounded-full bg-[#7a7a7a]">
        <div className="ml-[87px] h-[23px] w-[22px] rounded-full bg-[#cfcfcf]" />
      </div>
      <Ic w={16} h={16} className="ml-[16px]">
        <path d="M8 0v16M0 8h16" stroke="#fff" strokeWidth="3.600" />
      </Ic>
      <span className="ml-[33px] mr-[49px] text-[24.5px] font-light">100%</span>
    </div>
  </div>
);

export default function App() {
  return (
    <div className="flex h-[1800px] w-[2880px] flex-col overflow-hidden bg-[#2d2d2d] font-['Inter',sans-serif]">
      <TitleBar />
      <Ribbon />
      <FormulaBar />
      <div className="h-[6px] shrink-0 border-y border-[#9a9a9a] bg-white" />
      <div className="font-['Lato',sans-serif]">
        <Sheet />
      </div>
      <SheetTabs />
      <StatusBar />
    </div>
  );
}
